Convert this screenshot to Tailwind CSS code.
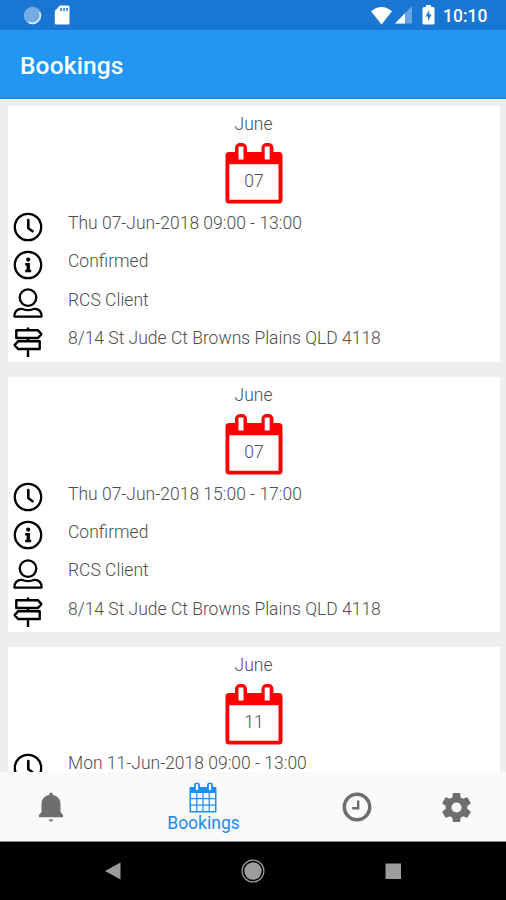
<!DOCTYPE html>
<html lang="en">
<head>
<meta charset="utf-8">
<title>Bookings</title>
<script src="https://cdn.jsdelivr.net/npm/@tailwindcss/browser@4"></script>
</head>
<body class="w-[506px] h-[900px] overflow-hidden bg-[#eeeeee] font-['Roboto','Liberation_Sans',sans-serif] flex flex-col">
<svg class="hidden">
  <symbol id="clock" viewBox="0 0 30 30"><circle cx="15" cy="15" r="13.2" fill="none" stroke="#000" stroke-width="2.3"/><path d="M15.3 8v8.2l4.2 3" fill="none" stroke="#000" stroke-width="2.6" stroke-linecap="round" stroke-linejoin="round"/></symbol>
  <symbol id="info" viewBox="0 0 30 30"><circle cx="15" cy="15" r="13.2" fill="none" stroke="#000" stroke-width="2.3"/><circle cx="15.2" cy="9.6" r="2.1"/><path d="M12.2 13h4.7v6.800h1.300v2.400h-6v-2.400h1.400v-4.400h-1.400z"/></symbol>
  <symbol id="user" viewBox="0 0 30 30"><g fill="none" stroke="#000" stroke-width="2.3" stroke-linejoin="round"><circle cx="15" cy="9.600" r="8.300"/><path d="M8.500 20.800C4 20.800 1.400 23.600 1.400 28.600H28.600C28.600 23.600 26 20.800 21.500 20.800Q15 23.400 8.500 20.800Z"/></g></symbol>
  <symbol id="signs" viewBox="0 0 30 30"><g fill="none" stroke="#000" stroke-width="2.4" stroke-linejoin="round"><path d="M15 .5v2.500M15 11v3M15 22v8M3.300 3.200H25l3.300 3.900L25 11H3.300zM26.700 14.200H5l-3.300 3.900L5 22h21.700z"/></g></symbol>
  <symbol id="cal" viewBox="0 0 58 62"><path fill="#f00" d="M3.500 10H10V6a5 5 0 0 1 5-5h2a5 5 0 0 1 5 5v4h14.500V6a5 5 0 0 1 5-5h2a5 5 0 0 1 5 5v4H54a3.500 3.500 0 0 1 3.500 3.500V58a3.500 3.500 0 0 1-3.500 3.500H4A3.500 3.500 0 0 1 .5 58V13.500A3.500 3.500 0 0 1 3.500 10z"/><path fill="#fff" d="M4.300 22.300h49.200v35.500H4.300zM13.500 4.500h5v13h-5zM39.700 4.500h5v13h-5z"/></symbol>
</svg>

<header class="shrink-0">
  <div class="h-[30px] bg-[#1976d2] flex items-center">
    <svg class="ml-[23px]" width="19" height="19" viewBox="0 0 19 19"><circle cx="9.500" cy="9.500" r="8.700" fill="#74abe3"/><path d="M16.500 6A7.900 7.900 0 0 1 5.500 16.300" fill="none" stroke="#dcebf9" stroke-width="1.700"/></svg>
    <svg class="ml-[12px]" width="16" height="20" viewBox="0 0 16 20"><path fill="#fff" d="M6 .5h8A1.500 1.500 0 0 1 15.500 2v16a1.500 1.500 0 0 1-1.500 1.500H2.300A1.500 1.500 0 0 1 .8 18V6z"/><path stroke="#1976d2" stroke-width="1.500" d="M7 3v3M10 3v3M13 3v3"/></svg>
    <svg class="ml-[300px]" width="23" height="19" viewBox="0 0 23 19"><path fill="#fff" d="M1 5.300Q11.500-3.300 22 5.300L11.500 18.500z"/></svg>
    <svg class="ml-[2px]" width="17" height="18" viewBox="0 0 17 18"><path fill="#68a4e1" d="M0 17.500L17 0v17.500z"/><path fill="#fff" d="M0 17.500L10 7.200v10.300z"/></svg>
    <svg class="ml-[10px]" width="13" height="20" viewBox="0 0 13 20"><path fill="#fff" d="M4 0h5v2h2q1.500 0 1.500 1.500v14.500q0 1.500-1.500 1.500H2Q.5 19.500.5 18V3.500Q.5 2 2 2h2z"/><path fill="#1976d2" d="M7.200 5L3.500 11.500H6V16l3.700-6.500H7.200z"/></svg>
    <div class="ml-[8px] mt-[2px] text-white text-[17.5px] font-medium leading-5">10:10</div>
  </div>
  <div class="h-[69px] bg-[#2196f3] border-b border-[#1485e6] flex items-center pl-[20px] pt-[3px]">
    <h1 class="text-white text-[24.5px] font-medium leading-7 tracking-[0.15px]">Bookings</h1>
  </div>
</header>

<main class="h-[673px] shrink-0 overflow-hidden pt-[6px] pl-[8px] pr-[6px] flex flex-col gap-[15px] text-[17.5px] font-light text-[#4d4d4d] border-t border-[#f7f9fa]">
  <section class="h-[255.5px] shrink-0 bg-white">
    <div class="h-[36px] pt-[8px] pr-[1px] leading-[20px] text-center">June</div>
    <div class="h-[66px] flex justify-center"><div class="grid w-[58px] h-[62px]"><svg class="col-start-1 row-start-1" width="58" height="62"><use href="#cal"/></svg><span class="col-start-1 row-start-1 z-10 pt-[29px] leading-[20px] text-center">07</span></div></div>
    <div class="flex h-[38.4px] pl-[5px] pt-[3.5px]"><svg width="30" height="30"><use href="#clock"/></svg><span class="ml-[25px] mt-[1.500px] leading-[20px]">Thu 07-Jun-2018 09:00 - 13:00</span></div>
    <div class="flex h-[38.4px] pl-[5px] pt-[3.5px]"><svg width="30" height="30"><use href="#info"/></svg><span class="ml-[25px] mt-[1.500px] leading-[20px]">Confirmed</span></div>
    <div class="flex h-[38.4px] pl-[5px] pt-[3.5px]"><svg width="30" height="30"><use href="#user"/></svg><span class="ml-[25px] mt-[1.500px] leading-[20px]">RCS Client</span></div>
    <div class="flex h-[38.4px] pl-[5px] pt-[3.5px]"><svg width="30" height="30"><use href="#signs"/></svg><span class="ml-[25px] mt-[1.500px] leading-[20px]">8/14 St Jude Ct Browns Plains QLD 4118</span></div>
  </section>
  <section class="h-[255.5px] shrink-0 bg-white">
    <div class="h-[36px] pt-[8px] pr-[1px] leading-[20px] text-center">June</div>
    <div class="h-[66px] flex justify-center"><div class="grid w-[58px] h-[62px]"><svg class="col-start-1 row-start-1" width="58" height="62"><use href="#cal"/></svg><span class="col-start-1 row-start-1 z-10 pt-[29px] leading-[20px] text-center">07</span></div></div>
    <div class="flex h-[38.4px] pl-[5px] pt-[3.5px]"><svg width="30" height="30"><use href="#clock"/></svg><span class="ml-[25px] mt-[1.500px] leading-[20px]">Thu 07-Jun-2018 15:00 - 17:00</span></div>
    <div class="flex h-[38.4px] pl-[5px] pt-[3.5px]"><svg width="30" height="30"><use href="#info"/></svg><span class="ml-[25px] mt-[1.500px] leading-[20px]">Confirmed</span></div>
    <div class="flex h-[38.4px] pl-[5px] pt-[3.5px]"><svg width="30" height="30"><use href="#user"/></svg><span class="ml-[25px] mt-[1.500px] leading-[20px]">RCS Client</span></div>
    <div class="flex h-[38.4px] pl-[5px] pt-[3.5px]"><svg width="30" height="30"><use href="#signs"/></svg><span class="ml-[25px] mt-[1.500px] leading-[20px]">8/14 St Jude Ct Browns Plains QLD 4118</span></div>
  </section>
  <section class="h-[255.5px] shrink-0 bg-white">
    <div class="h-[36px] pt-[8px] pr-[1px] leading-[20px] text-center">June</div>
    <div class="h-[66px] flex justify-center"><div class="grid w-[58px] h-[62px]"><svg class="col-start-1 row-start-1" width="58" height="62"><use href="#cal"/></svg><span class="col-start-1 row-start-1 z-10 pt-[29px] leading-[20px] text-center">11</span></div></div>
    <div class="flex h-[38.4px] pl-[5px] pt-[3.5px]"><svg width="30" height="30"><use href="#clock"/></svg><span class="ml-[25px] mt-[1.500px] leading-[18px]">Mon 11-Jun-2018 09:00 - 13:00</span></div>
  </section>
</main>

<nav class="h-[70px] shrink-0 bg-[#fafafa] border-b border-[#8a8a8a] pt-[1px] grid grid-cols-[101px_205px_101px_99px] justify-items-center items-center">
  <svg width="26" height="30" viewBox="0 0 26 30" fill="#6e6e6e"><path d="M13 .5q1.800 0 2 2.500c5 1.200 7.500 4.500 7.500 9.500v7.500l2.500 3v2.300H1V23l2.500-3v-7.500C3.500 7.500 6 4.200 11 3q.2-2.500 2-2.500z"/><path d="M10.500 27.600h5q-.8 2-2.500 2t-2.500-2z"/></svg>
  <div class="flex flex-col items-center text-[#1e88f0]">
    <svg width="28" height="31" viewBox="0 0 28 31"><path fill="#1e8ff2" d="M1.500 5H5V3.500a3 3 0 0 1 6 0V5h7V3.500a3 3 0 0 1 6 0V5h2.500A1 1 0 0 1 27.500 6v23.500a1 1 0 0 1-1 1h-25a1 1 0 0 1-1-1V6a1 1 0 0 1 1-1z"/><path fill="#fafafa" d="M6.900 2.500q1.100-1.200 2.200 0v5q-1.100 1.600-2.200 0zM19.900 2.500q1.100-1.200 2.200 0v5q-1.100 1.600-2.200 0zM2 11h5.200v5H2zM8.400 11h5v5h-5zM14.600 11h5v5h-5zM20.800 11H26v5h-5.200zM2 17.300h5.200v5.200H2zM8.400 17.300h5v5.200h-5zM14.600 17.300h5v5.200h-5zM20.800 17.300H26v5.200h-5.200zM2 23.800h5.200V29H2zM8.400 23.800h5V29h-5zM14.600 23.800h5V29h-5zM20.800 23.800H26V29h-5.200z"/></svg>
    <span class="text-[17.5px] leading-[20px]">Bookings</span>
  </div>
  <svg width="30" height="30" viewBox="0 0 30 30" fill="none" stroke="#6e6e6e"><circle cx="15" cy="15" r="12.700" stroke-width="3.500"/><path d="M16.200 8.500v7.700h-6" stroke-width="2.400"/></svg>
  <svg width="35" height="35" viewBox="0 0 24 24" fill="#6e6e6e"><path d="M19.430 12.980c.04-.32.07-.64.07-.98s-.03-.66-.07-.98l2.110-1.650c.19-.15.24-.42.12-.64l-2-3.460c-.12-.22-.39-.3-.61-.22l-2.490 1c-.52-.4-1.080-.73-1.690-.98l-.38-2.650C14.460 2.180 14.250 2 14 2h-4c-.25 0-.46.18-.49.42l-.38 2.650c-.61.25-1.170.59-1.690.98l-2.490-1c-.23-.09-.49 0-.61.22l-2 3.460c-.13.22-.07.49.12.64l2.110 1.650c-.04.32-.07.65-.07.98s.03.66.07.98l-2.110 1.650c-.19.15-.24.42-.12.64l2 3.460c.12.22.39.3.61.22l2.490-1c.52.4 1.080.73 1.690.98l.38 2.650c.03.24.24.42.49.42h4c.25 0 .46-.18.49-.42l.38-2.650c.61-.25 1.170-.59 1.690-.98l2.490 1c.23.09.49 0 .61-.22l2-3.460c.12-.22.07-.49-.12-.64zM12 15.500a3.500 3.500 0 1 1 0-7 3.500 3.500 0 0 1 0 7z"/></svg>
</nav>

<footer class="h-[58px] shrink-0 bg-black flex items-center justify-center gap-[116px]">
  <svg width="24" height="24" viewBox="0 0 24 24"><path fill="#9c9c9c" d="M4 12L19.500 3.500v17z"/></svg>
  <svg width="24" height="24" viewBox="0 0 24 24"><circle cx="12" cy="12" r="10.900" fill="none" stroke="#9c9c9c" stroke-width="1.200"/><circle cx="12" cy="12" r="8.700" fill="#9c9c9c"/></svg>
  <svg width="24" height="24" viewBox="0 0 24 24"><path fill="#9c9c9c" d="M4.500 4.500h15.500v15.500H4.500z"/></svg>
</footer>
</body>
</html>
